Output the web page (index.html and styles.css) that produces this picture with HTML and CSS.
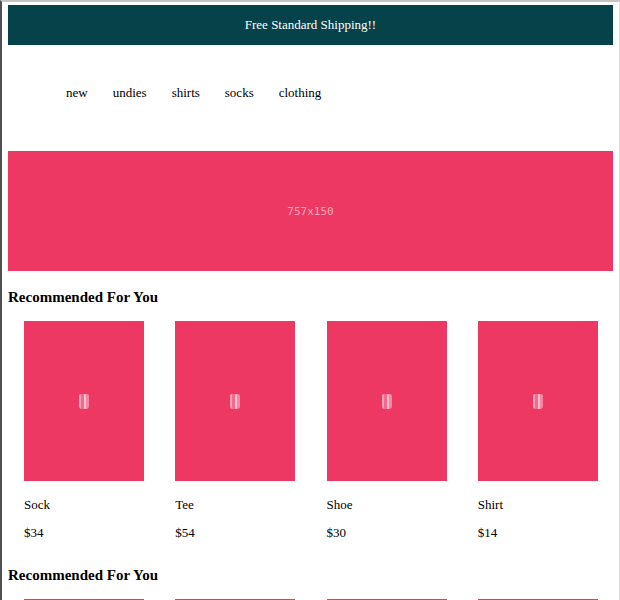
FILE: index.html
```html
<!DOCTYPE html>
<html>
<head>
<meta charset="utf-8">
<link rel="stylesheet" href="styles.css">
</head>
<body>
<div class="promo">Free Standard Shipping!!</div>
<nav class="nav">
  <a>new</a><a>undies</a><a>shirts</a><a>socks</a><a>clothing</a>
</nav>
<div class="hero"><span class="hero-label">757x150</span></div>

<section class="recs">
  <h2 class="recs-title">Recommended For You</h2>
  <div class="grid">
    <div class="card"><div class="thumb"><span class="thumb-mark"></span></div><p class="name">Sock</p><p class="price">$34</p></div>
    <div class="card"><div class="thumb"><span class="thumb-mark"></span></div><p class="name">Tee</p><p class="price">$54</p></div>
    <div class="card"><div class="thumb"><span class="thumb-mark"></span></div><p class="name">Shoe</p><p class="price">$30</p></div>
    <div class="card"><div class="thumb"><span class="thumb-mark"></span></div><p class="name">Shirt</p><p class="price">$14</p></div>
  </div>
</section>

<section class="recs">
  <h2 class="recs-title">Recommended For You</h2>
  <div class="grid">
    <div class="card"><div class="thumb"></div></div>
    <div class="card"><div class="thumb"></div></div>
    <div class="card"><div class="thumb"></div></div>
    <div class="card"><div class="thumb"></div></div>
  </div>
</section>
</body>
</html>
```

FILE: styles.css
```css
html {
  border-left: 2px solid #505050;
  border-top: 2px solid #c4c4c4;
  border-right: 1px solid #e2e2e2;
  background: #fff;
  overflow: hidden;
  height: 600px;
  box-sizing: border-box;
}
body {
  margin: 3px 6px 0 6px;
  font-family: "Liberation Serif", "Times New Roman", serif;
  font-size: 13px;
  line-height: 15px;
  color: #000;
}
.promo {
  height: 40px;
  line-height: 40px;
  background: #05424a;
  color: #fff;
  text-align: center;
  font-size: 13px;
}
.nav {
  display: flex;
  gap: 25px;
  padding: 40px 0 51px 58px;
  line-height: 15px;
}
.nav a {
  color: #000;
  text-decoration: none;
}
.hero {
  height: 120px;
  background: #ee3864;
  display: flex;
  align-items: center;
  justify-content: center;
}
.hero-label {
  font-family: "DejaVu Sans Mono", monospace;
  font-size: 11px;
  color: #f9a9bd;
}
.recs {
  padding-top: 17px;
}
.recs-title {
  margin: 0;
  font-size: 15px;
  line-height: 18px;
  font-weight: bold;
}
.grid {
  display: grid;
  grid-template-columns: repeat(4, 1fr);
  margin-top: 15px;
}
.card {
  padding: 0 0 9px 16px;
}
.thumb {
  width: 120px;
  height: 160px;
  background: #ee3864;
  display: flex;
  align-items: center;
  justify-content: center;
}
.thumb-mark {
  width: 10px;
  height: 15px;
  background:
    linear-gradient(90deg,
      rgba(255,255,255,0.55) 0 25%,
      rgba(255,200,215,0.35) 25% 50%,
      rgba(255,235,242,0.75) 50% 70%,
      rgba(255,210,225,0.5) 70% 100%);
  filter: blur(0.6px);
  border-radius: 2px 2px 3px 3px;
}
.name {
  margin: 16px 0 0;
}
.price {
  margin: 13px 0 0;
}
```
